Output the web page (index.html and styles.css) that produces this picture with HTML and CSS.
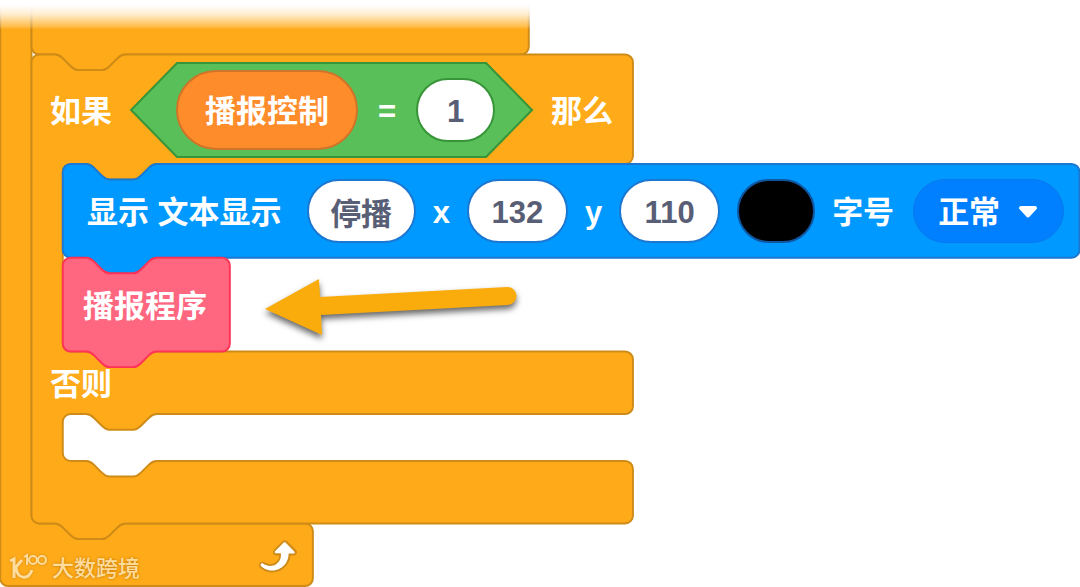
FILE: index.html
```html
<!DOCTYPE html>
<html lang="zh-CN">
<head>
<meta charset="utf-8">
<title>播报程序</title>
<link rel="stylesheet" href="styles.css">
</head>
<body>
<main class="workspace">
  <svg class="shapes" aria-hidden="true">
    <!-- block outlines in block units, origin at the if/else corner -->
    <g transform="translate(31.5 54.5) scale(1.954)">
      <path class="control" d="M-16,-40 V268 a4,4 0 0,0 4,4 H140 a4,4 0 0,0 4,-4 V244 a4,4 0 0,0 -4,-4 H48 c-2,0 -3,1 -4,2 l-4,4 c-1,1 -2,2 -4,2 h-12 c-2,0 -3,-1 -4,-2 l-4,-4 c-1,-1 -2,-2 -4,-2 H4 a4,4 0 0,1 -4,-4 V-40 Z"/>
      <path class="control" d="M0,-40 V-4 a4,4 0 0,0 4,4 H12 c2,0 3,1 4,2 l4,4 c1,1 2,2 4,2 h12 c2,0 3,-1 4,-2 l4,-4 c1,-1 2,-2 4,-2 H250.500 a4,4 0 0,0 4,-4 V-40 Z"/>
      <path class="control" d="M0,4 A4,4 0 0,1 4,0 H12 c2,0 3,1 4,2 l4,4 c1,1 2,2 4,2 h12 c2,0 3,-1 4,-2 l4,-4 c1,-1 2,-2 4,-2 H303.800 a4,4 0 0,1 4,4 V52 a4,4 0 0,1 -4,4 H64 c-2,0 -3,1 -4,2 l-4,4 c-1,1 -2,2 -4,2 h-12 c-2,0 -3,-1 -4,-2 l-4,-4 c-1,-1 -2,-2 -4,-2 h-8 a4,4 0 0,0 -4,4 V148 a4,4 0 0,0 4,4 H303.800 a4,4 0 0,1 4,4 V180 a4,4 0 0,1 -4,4 H64 c-2,0 -3,1 -4,2 l-4,4 c-1,1 -2,2 -4,2 h-12 c-2,0 -3,-1 -4,-2 l-4,-4 c-1,-1 -2,-2 -4,-2 h-8 a4,4 0 0,0 -4,4 V204 a4,4 0 0,0 4,4 h8 c2,0 3,1 4,2 l4,4 c1,1 2,2 4,2 h12 c2,0 3,-1 4,-2 l4,-4 c1,-1 2,-2 4,-2 H303.800 a4,4 0 0,1 4,4 V236 a4,4 0 0,1 -4,4 H48 c-2,0 -3,1 -4,2 l-4,4 c-1,1 -2,2 -4,2 h-12 c-2,0 -3,-1 -4,-2 l-4,-4 c-1,-1 -2,-2 -4,-2 H4 a4,4 0 0,1 -4,-4 Z"/>
      <path class="display" d="M16,60 a4,4 0 0,1 4,-4 h8 c2,0 3,1 4,2 l4,4 c1,1 2,2 4,2 h12 c2,0 3,-1 4,-2 l4,-4 c1,-1 2,-2 4,-2 H532.300 a4,4 0 0,1 4,4 V100 a4,4 0 0,1 -4,4 H64 c-2,0 -3,1 -4,2 l-4,4 c-1,1 -2,2 -4,2 h-12 c-2,0 -3,-1 -4,-2 l-4,-4 c-1,-1 -2,-2 -4,-2 h-8 a4,4 0 0,1 -4,-4 Z"/>
      <path class="procedure" d="M16,108 a4,4 0 0,1 4,-4 h8 c2,0 3,1 4,2 l4,4 c1,1 2,2 4,2 h12 c2,0 3,-1 4,-2 l4,-4 c1,-1 2,-2 4,-2 H97.500 a4,4 0 0,1 4,4 V148 a4,4 0 0,1 -4,4 H64 c-2,0 -3,1 -4,2 l-4,4 c-1,1 -2,2 -4,2 h-12 c-2,0 -3,-1 -4,-2 l-4,-4 c-1,-1 -2,-2 -4,-2 h-8 a4,4 0 0,1 -4,-4 Z"/>
    </g>
  </svg>

  <section class="stack">
    <div class="row row-previous"></div>
    <div class="row row-if">
      <span class="label">如果</span>
      <div class="condition">
        <svg class="hexagon" viewBox="0 0 403 96" aria-hidden="true"><path d="M47,1 H356 L402,48 L356,95 H47 L1,48 Z"/></svg>
        <span class="variable"><span class="label">播报控制</span></span>
        <span class="label">=</span>
        <input class="field field-short" type="text" value="1" aria-label="比较值">
      </div>
      <span class="label">那么</span>
    </div>
    <div class="row row-display">
      <span class="label title">显示 文本显示</span>
      <input class="field field-text" type="text" value="停播" aria-label="文本">
      <label class="label" for="pos-x">x</label>
      <input class="field field-number" id="pos-x" type="text" value="132">
      <label class="label" for="pos-y">y</label>
      <input class="field field-number" id="pos-y" type="text" value="110">
      <button class="swatch" type="button" aria-label="颜色"></button>
      <label class="label size-label" for="size">字号</label>
      <span class="dropdown">
        <select id="size"><option>正常</option></select>
        <svg class="caret" viewBox="0 0 20 14" aria-hidden="true"><path d="M3,3 H17 L10,10.500 Z"/></svg>
      </span>
    </div>
    <div class="row row-procedure"><span class="label">播报程序</span></div>
    <div class="row row-else"><span class="label">否则</span></div>
    <div class="row row-empty"></div>
    <div class="row row-footer">
      <div class="watermark">
        <svg class="mark" viewBox="0 0 42 28" aria-hidden="true">
          <path class="thick" d="M2,9 L6,7 V26 M14,8 L8,15 C9,27 20,29 24,18"/>
          <path class="thin" d="M16,5 L19,3 V13"/>
          <circle class="thin" cx="25" cy="8" r="4"/>
          <circle class="thin" cx="34" cy="8" r="4"/>
        </svg>
        <span>大数跨境</span>
      </div>
      <svg class="loop" viewBox="0 0 24 24" aria-hidden="true">
        <path fill="#cf8b17" d="M23.300,11c-0.300,0.600-0.900,1-1.500,1h-1.600c-0.100,1.300-0.500,2.500-1.100,3.600c-0.900,1.700-2.300,3.200-4.100,4.100c-1.700,0.900-3.600,1.200-5.500,0.900c-1.800-0.300-3.500-1.100-4.900-2.300c-0.700-0.700-0.700-1.900,0-2.600c0.600-0.600,1.600-0.700,2.300-0.200H7c0.900,0.600,1.900,0.900,2.900,0.900s1.900-0.300,2.700-0.900c1.100-0.800,1.800-2.100,1.800-3.500h-1.500c-0.900,0-1.700-0.700-1.700-1.700c0-0.400,0.200-0.900,0.500-1.200l4.400-4.400c0.700-0.600,1.700-0.600,2.400,0L23,9.200C23.500,9.700,23.600,10.400,23.300,11z"/>
        <path fill="#fff" d="M21.800,11h-2.600c0,1.500-0.300,2.900-1,4.200c-0.800,1.600-2.100,2.800-3.700,3.600c-1.500,0.800-3.300,1.100-4.900,0.800c-1.600-0.200-3.200-1-4.400-2.100c-0.400-0.300-0.400-0.900-0.100-1.200c0.300-0.400,0.900-0.400,1.200-0.100c1,0.700,2.200,1.100,3.400,1.100s2.300-0.300,3.300-1c0.900-0.600,1.600-1.500,2-2.600c0.300-0.900,0.400-1.800,0.200-2.800h-2.400c-0.400,0-0.700-0.300-0.700-0.700c0-0.200,0.100-0.300,0.200-0.400l4.400-4.400c0.300-0.300,0.700-0.300,0.900,0L22,9.800c0.300,0.300,0.400,0.600,0.300,0.900S22,11,21.800,11z"/>
      </svg>
    </div>
  </section>

  <svg class="pointer" viewBox="0 0 260 70" aria-hidden="true">
    <path d="M5,39 L59,9 L60,27 L247,17 A9,9 0 0,1 248,35 L61,45 L62,65 Z"/>
  </svg>
  <div class="fade"></div>
</main>
</body>
</html>
```
FILE: styles.css
```css
* {
  box-sizing: border-box;
}

body {
  margin: 0;
  background: #fff;
  overflow: hidden;
}

.workspace {
  position: relative;
  color: #fff;
  font: bold 31px/40px "Liberation Sans", "Noto Sans CJK SC", sans-serif;
  white-space: nowrap;
}

.shapes {
  position: absolute;
  inset: 0;
  width: 100%;
  height: 100%;
  overflow: visible;
}

.shapes path {
  stroke-width: 1;
}

.control {
  fill: #ffab19;
  stroke: #cf8b17;
}

.display {
  fill: #0099ff;
  stroke: #1a78d2;
}

.procedure {
  fill: #ff6680;
  stroke: #ff3355;
}

.stack {
  position: relative;
  display: flex;
  flex-direction: column;
}

.row {
  display: flex;
  align-items: center;
}

.label {
  display: block;
  padding-top: 4px;
}

.row-previous {
  min-height: 55px;
}

.row-if {
  min-height: 109px;
  gap: 17px;
  padding-left: 50px;
}

.condition {
  position: relative;
  display: flex;
  align-items: center;
  gap: 20px;
  height: 96px;
  padding: 0 39px 0 47px;
}

.hexagon {
  position: absolute;
  inset: 0;
  width: 100%;
  height: 100%;
}

.hexagon path {
  fill: #59c059;
  stroke: #389438;
  stroke-width: 2;
}

.condition > span,
.condition > input {
  position: relative;
}

.variable {
  padding: 16px 27px;
  border: 2px solid #cf7428;
  border-radius: 40px;
  background: #ff8c2b;
}

.field {
  height: 64px;
  padding: 4px 0 0;
  border: 2px solid #1a78d2;
  border-radius: 32px;
  background: #fff;
  color: #575e75;
  font: inherit;
  text-align: center;
}

.field-short {
  width: 79px;
  border-color: #389438;
}

.field-text {
  width: 109px;
  padding-top: 0;
}

.field-number {
  width: 101px;
}

.row-display {
  min-height: 94px;
  gap: 17px;
  padding-left: 87px;
}

.title {
  padding-right: 8px;
}

.swatch {
  width: 78px;
  height: 64px;
  padding: 0;
  border: 2px solid #0f55a0;
  border-radius: 32px;
  background: #000;
}

.size-label {
  padding-right: 2px;
}

.dropdown {
  position: relative;
}

.dropdown select {
  display: block;
  width: 151px;
  height: 64px;
  padding: 4px 24px 0;
  border: 1px solid #0a78ec;
  border-radius: 32px;
  background: #0080ff;
  color: inherit;
  font: inherit;
  appearance: none;
}

.caret {
  position: absolute;
  top: 26px;
  right: 26px;
  width: 20px;
  height: 14px;
  pointer-events: none;
}

.caret path {
  fill: #fff;
  stroke: #fff;
  stroke-width: 4;
  stroke-linejoin: round;
}

.row-procedure {
  min-height: 94px;
  padding-left: 83px;
}

.row-else {
  min-height: 62px;
  padding-left: 50px;
}

.row-empty {
  min-height: 110px;
}

.row-footer {
  align-items: flex-start;
  justify-content: space-between;
  width: 298px;
  min-height: 63px;
  padding: 8px 0 0 8px;
}

.watermark {
  display: flex;
  align-items: center;
  gap: 2px;
  padding-top: 18px;
  color: #ffdc9c;
  font: 500 22px/32px "Noto Sans CJK SC", sans-serif;
  text-shadow: 0 0 3px #b87200;
}

.mark {
  width: 42px;
  height: 28px;
  fill: none;
  stroke: #ffdc9c;
  filter: drop-shadow(0 0 1px #c98312);
}

.thick {
  stroke-width: 3;
}

.thin {
  stroke-width: 2;
}

.loop {
  width: 47px;
  height: 47px;
}

.pointer {
  position: absolute;
  top: 270px;
  left: 260px;
  width: 260px;
  height: 70px;
  overflow: visible;
  filter: drop-shadow(0 4px 3px rgba(0, 0, 0, 0.6));
}

.pointer path {
  fill: #f9ac0c;
}

.fade {
  position: absolute;
  inset: 0 0 auto;
  height: 29px;
  background: linear-gradient(#fff 5px, rgba(255, 255, 255, 0.8) 14px, rgba(255, 255, 255, 0.2) 27px, transparent);
}
```
